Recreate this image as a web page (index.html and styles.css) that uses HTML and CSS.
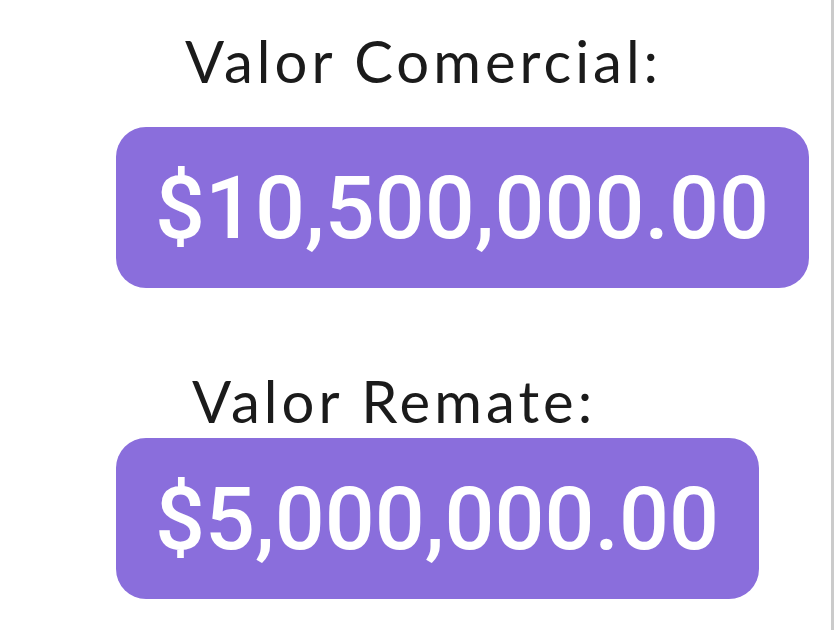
FILE: index.html
```html
<!DOCTYPE html>
<html lang="es">
<head>
<meta charset="utf-8">
<title>Valores</title>
<link rel="stylesheet" href="styles.css">
</head>
<body>
<main class="panel">
  <section class="field field-comercial">
    <div class="label">Valor Comercial:</div>
    <div class="pill">$10,500,000.00</div>
  </section>
  <section class="field field-remate">
    <div class="label">Valor Remate:</div>
    <div class="pill">$5,000,000.00</div>
  </section>
</main>
</body>
</html>
```
FILE: styles.css
```css
html, body {
  margin: 0;
  padding: 0;
  background: #ffffff;
}
body {
  width: 840px;
  height: 630px;
  overflow: hidden;
  display: flex;
}
.panel {
  width: 834px;
  height: 630px;
  box-sizing: border-box;
  border-right: 3px solid #cbcbcb;
  display: flex;
  flex-direction: column;
  align-items: flex-start;
  padding: 26px 0 0 116px;
}
.field {
  display: flex;
  flex-direction: column;
  align-items: flex-start;
}
.label {
  font-family: "Lato", "Noto Sans", sans-serif;
  font-size: 58px;
  line-height: 70px;
  color: #1b1b1b;
  letter-spacing: 4px;
}
.field-comercial .label {
  padding-left: 69px;
  margin-bottom: 31px;
}
.field-remate {
  margin-top: 78px;
}
.field-remate .label {
  padding-left: 76px;
  margin-bottom: 2px;
}
.pill {
  background: #8a6edc;
  color: #ffffff;
  border-radius: 30px;
  font-family: "Roboto", "Open Sans", sans-serif;
  font-weight: 500;
  font-size: 88px;
  line-height: 161px;
  height: 161px;
  padding: 0 40px 0 39px;
  letter-spacing: 0;
}
```
